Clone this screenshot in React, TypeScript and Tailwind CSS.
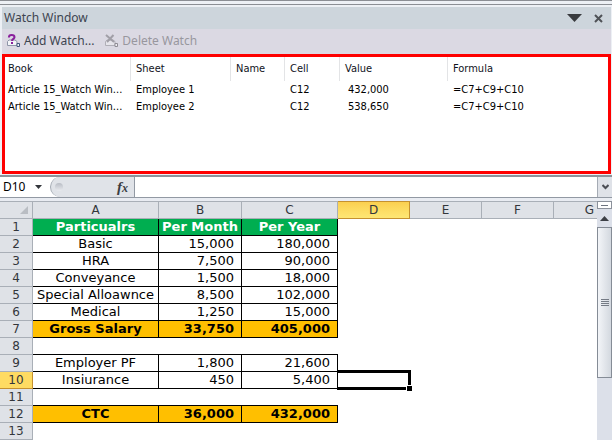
import { useState } from "react";
import clsx from "clsx";

interface Watch {
  book: string;
  sheet: string;
  name: string;
  cell: string;
  value: string;
  formula: string;
}

interface SheetRow {
  kind: "head" | "data" | "total" | "blank" | "empty";
  cells: [string, string, string];
}

const watches: Watch[] = [
  { book: "Article 15_Watch Win...", sheet: "Employee 1", name: "", cell: "C12", value: "432,000", formula: "=C7+C9+C10" },
  { book: "Article 15_Watch Win...", sheet: "Employee 2", name: "", cell: "C12", value: "538,650", formula: "=C7+C9+C10" },
];

const columns = ["A", "B", "C", "D", "E", "F", "G"];

const rows: SheetRow[] = [
  { kind: "head", cells: ["Particualrs", "Per Month", "Per Year"] },
  { kind: "data", cells: ["Basic", "15,000", "180,000"] },
  { kind: "data", cells: ["HRA", "7,500", "90,000"] },
  { kind: "data", cells: ["Conveyance", "1,500", "18,000"] },
  { kind: "data", cells: ["Special Alloawnce", "8,500", "102,000"] },
  { kind: "data", cells: ["Medical", "1,250", "15,000"] },
  { kind: "total", cells: ["Gross Salary", "33,750", "405,000"] },
  { kind: "blank", cells: ["", "", ""] },
  { kind: "data", cells: ["Employer PF", "1,800", "21,600"] },
  { kind: "data", cells: ["Insiurance", "450", "5,400"] },
  { kind: "blank", cells: ["", "", ""] },
  { kind: "total", cells: ["CTC", "36,000", "432,000"] },
  { kind: "empty", cells: ["", "", ""] },
];

const AddWatchIcon = () => (
  <svg width="15" height="14" viewBox="0 0 15 14" fill="none" aria-hidden="true">
    <path d="M1.5 7.5v4h9.500V7.500L9 6H3z" fill="#f3f4f8" stroke="#8e95a8" />
    <path d="M2.900 3.400C2.900 1.800 4 1 5.600 1s2.900.8 2.900 2.300C8.500 5 6 4.900 6 7" stroke="#8a1f9c" strokeWidth="2" />
    <path d="M5 8h2v2H5z" fill="#8a1f9c" />
    <path d="M11 9.500h2.500v3H11z" fill="#eef2f8" stroke="#44577f" />
  </svg>
);

const DeleteWatchIcon = () => (
  <svg width="15" height="14" viewBox="0 0 15 14" fill="none" aria-hidden="true">
    <path d="M1.500 7.500v4h9.500V7.500L9 6H3z" fill="#e6e5eb" stroke="#b0afb7" />
    <path d="M2 1l8 7M9.500 1L3 8" stroke="#a19fa7" strokeWidth="2" />
    <path d="M11 9.500h2.500v3H11z" fill="#eeedf2" stroke="#8f8d95" />
  </svg>
);

const WatchWindow = () => (
  <section className="border-t border-[#8b8e94] bg-[#edf0f5] pt-[3px] pb-px">
    <div className="border-t border-[#8b8e94] pt-0.5 pr-px pl-0.5">
      <header className="flex h-[22px] items-center justify-between bg-[#cdd5dc] pr-2 pl-0.5">
        <h1 className="text-[12px] text-[#3d4450]">Watch Window</h1>
        <div className="flex items-center gap-3">
          <button type="button" aria-label="Window options">
            <svg width="15" height="8" viewBox="0 0 15 8"><path d="M0 0h15L7.5 8z" fill="#393b3f" /></svg>
          </button>
          <button type="button" aria-label="Close">
            <svg width="9" height="9" viewBox="0 0 9 9">
              <path d="M1 1l7 7M8 1L1 8" stroke="#4f5257" strokeWidth="2" />
            </svg>
          </button>
        </div>
      </header>
      <div className="flex h-[25px] items-center gap-2.5 bg-[#dbd9e3] px-1 pb-0.5 text-[12px] text-[#3d4450]">
        <button type="button" className="flex items-center gap-[3px]">
          <AddWatchIcon />
          Add Watch...
        </button>
        <button type="button" disabled className="flex items-center gap-[3px] text-[#98979e]">
          <DeleteWatchIcon />
          Delete Watch
        </button>
      </div>
      <div className="h-[120px] border-3 border-[#fe0000] bg-white">
        <table className="w-full table-fixed border-separate border-spacing-0 text-left font-['DejaVu_Sans_Condensed','DejaVu_Sans',sans-serif] text-[11px] leading-4 whitespace-nowrap text-black">
          <colgroup>
            <col className="w-[126px]" />
            <col className="w-[100px]" />
            <col className="w-[54px]" />
            <col className="w-[55px]" />
            <col className="w-[108px]" />
            <col />
          </colgroup>
          <thead>
            <tr className="h-6">
              {["Book", "Sheet", "Name", "Cell", "Value", "Formula"].map((title) => (
                <th
                  key={title}
                  className="border-r border-[#e3e4e6] py-0 pr-0 pl-[5px] font-normal text-[#10131c] first:pl-[3px] last:border-r-0"
                >
                  {title}
                </th>
              ))}
            </tr>
          </thead>
          <tbody>
            {watches.map((w) => (
              <tr key={w.sheet} className="h-[17px]">
                <td className="py-0 pl-[3px]">{w.book}</td>
                <td className="py-0 pl-[5px]">{w.sheet}</td>
                <td className="py-0 pl-[5px]">{w.name}</td>
                <td className="py-0 pl-[5px]">{w.cell}</td>
                <td className="py-0 pl-2">{w.value}</td>
                <td className="py-0 pl-[5px]">{w.formula}</td>
              </tr>
            ))}
          </tbody>
        </table>
      </div>
    </div>
  </section>
);

const FormulaBar = () => {
  const [formula, setFormula] = useState("");

  return (
    <div className="flex h-[23px] border-t-2 border-b border-t-[#8b949b] border-b-[#9299a3] bg-white">
      <input
        aria-label="Name box"
        defaultValue="D10"
        className="w-8 pl-[3px] font-['Noto_Sans',sans-serif] text-[12px] text-black outline-none"
      />
      <button type="button" aria-label="Show names" className="flex w-[18px] items-center pl-[3px]">
        <svg width="7" height="4" viewBox="0 0 7 4"><path d="M0 0h7L3.5 4z" fill="#33363b" /></svg>
      </button>
      <div className="flex w-[85px] items-center justify-between rounded-l-full border-r border-l border-r-[#9299a3] border-l-[#a5abb4] bg-[#e0e3e8] pr-1.5 pl-1">
        <span className="size-2 rounded-full bg-linear-to-b from-[#b9bdc5] to-[#e9ebef]" />
        <button
          type="button"
          aria-label="Insert function"
          className="font-['Liberation_Serif',serif] text-[15px] leading-4 font-bold text-[#3a3d42] italic"
        >
          f<span className="text-[12px]">x</span>
        </button>
      </div>
      <input
        aria-label="Formula"
        value={formula}
        onChange={(e) => setFormula(e.target.value)}
        className="min-w-0 flex-1 px-1 text-[12px] outline-none"
      />
      <button
        type="button"
        aria-label="Expand formula bar"
        className="flex w-[15px] items-center justify-center border-l border-[#a5abb4] bg-[#dfe2e8]"
      >
        <svg width="7" height="6" viewBox="0 0 7 6" fill="none">
          <path d="M0.5 1l3 3 3-3" stroke="#4b4e55" strokeWidth="2" />
        </svg>
      </button>
    </div>
  );
};

const Sheet = () => (
  <div className="min-w-0 flex-1 overflow-hidden bg-white">
    <table className="w-[626px] table-fixed border-separate border-spacing-0 font-['DejaVu_Sans',sans-serif] text-[13px] leading-4 whitespace-nowrap text-black">
      <colgroup>
        <col className="w-[33px]" />
        <col className="w-[126px]" />
        <col className="w-[83px]" />
        <col className="w-24" />
        <col className="w-[72px]" />
        <col className="w-[72px]" />
        <col className="w-[72px]" />
        <col className="w-[72px]" />
      </colgroup>
      <thead>
        <tr className="h-[18px] text-[12px] text-[#33363b]">
          <td className="border-t border-r border-b border-[#a9afb7] bg-[#dfe2e7] p-0 pr-1">
            <svg width="8" height="8" viewBox="0 0 8 8" className="ml-auto"><path d="M8 0v8H0z" fill="#b9bdc3" /></svg>
          </td>
          {columns.map((col) => (
            <th
              key={col}
              scope="col"
              className={clsx(
                "border-t border-r border-b p-0 font-normal",
                col === "D"
                  ? "border-[#c5912f] bg-linear-to-b from-[#fbd04f] to-[#fee774]"
                  : "border-[#a9afb7] bg-[#dfe2e7]"
              )}
            >
              {col}
            </th>
          ))}
        </tr>
      </thead>
      <tbody>
        {rows.map((row, i) => {
          const selected = i === 9;
          return (
            <tr key={i} className="h-[17px]">
              <th
                scope="row"
                className={clsx(
                  "border-r border-b p-0 text-[12px] font-normal text-[#33363b]",
                  selected ? "border-[#c5912f] bg-[#fedb62]" : "border-[#a9afb7] bg-[#dfe2e7]"
                )}
              >
                {i + 1}
              </th>
              {row.cells.map((text, j) => (
                <td
                  key={j}
                  className={clsx(
                    "p-0",
                    row.kind !== "empty" && "border-b border-black",
                    row.kind !== "empty" && row.kind !== "blank" && "border-r",
                    row.kind === "head" && "bg-[#00ae50] font-bold text-white",
                    row.kind === "total" && "bg-[#ffbf00] font-bold",
                    j === 0 || row.kind === "head" ? "text-center" : "pr-[7px] text-right"
                  )}
                >
                  {text}
                </td>
              ))}
              <td className="relative p-0">
                {selected && (
                  <div className="absolute -inset-x-px -top-0.5 -bottom-px border-3 border-l border-black">
                    <span className="absolute -right-1 -bottom-1 size-[6px] border-t border-l border-white bg-black" />
                  </div>
                )}
              </td>
              <td colSpan={3} className="p-0" />
            </tr>
          );
        })}
      </tbody>
    </table>
  </div>
);

const ScrollBar = () => (
  <div className="flex w-[15px] flex-col bg-[#dce0e9]">
    <div className="flex h-2 items-center justify-center border border-[#8b919b] bg-white">
      <span className="h-px w-[7px] bg-[#6d7480]" />
    </div>
    <button type="button" aria-label="Scroll up" className="flex h-[18px] items-center justify-center">
      <svg width="9" height="5" viewBox="0 0 9 5"><path d="M0 5h9L4.5 0z" fill="#3c3f45" /></svg>
    </button>
    <div className="flex h-[151px] flex-col items-center justify-center gap-px border border-[#858c96] bg-linear-to-r from-[#f3f5f8] to-[#d3d8df]">
      <span className="h-px w-2 bg-[#757b85]" />
      <span className="h-px w-2 bg-[#757b85]" />
      <span className="h-px w-2 bg-[#757b85]" />
      <span className="h-px w-2 bg-[#757b85]" />
    </div>
  </div>
);

export default function App() {
  return (
    <main className="flex min-h-screen flex-col overflow-hidden bg-white font-['Noto_Sans',sans-serif]">
      <WatchWindow />
      <FormulaBar />
      <div className="h-[3px] bg-[#e9ecf2]" />
      <div className="flex flex-1">
        <Sheet />
        <ScrollBar />
      </div>
    </main>
  );
}
